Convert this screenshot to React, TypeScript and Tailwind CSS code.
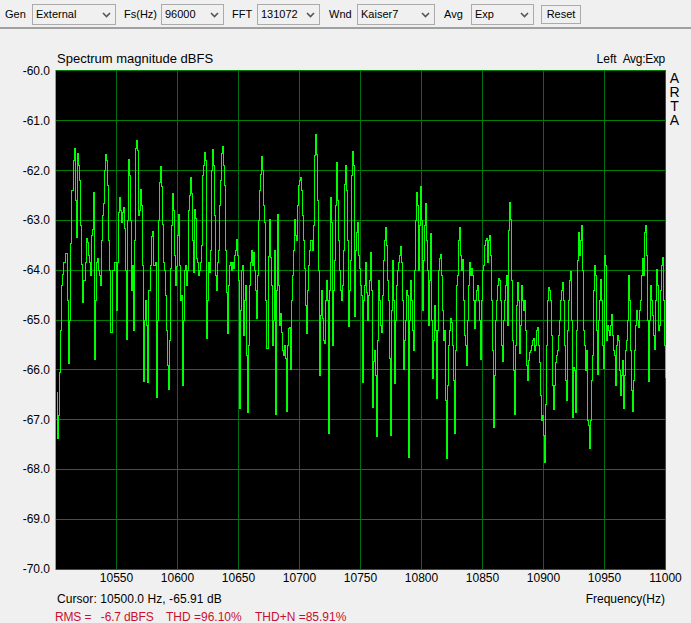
const font = { fontFamily: '"Liberation Sans", Arial, sans-serif' };

const selects = [
  { label: 'Gen', value: 'External', labelClass: 'ml-[5px] w-[27px]', boxClass: 'w-[84px]' },
  { label: 'Fs(Hz)', value: '96000', labelClass: 'ml-[8px] w-[37px]', boxClass: 'w-[63px]' },
  { label: 'FFT', value: '131072', labelClass: 'ml-[8px] w-[25px]', boxClass: 'w-[63px]' },
  { label: 'Wnd', value: 'Kaiser7', labelClass: 'ml-[9px] w-[28px]', boxClass: 'w-[78px]' },
  { label: 'Avg', value: 'Exp', labelClass: 'ml-[9px] w-[27px]', boxClass: 'w-[63px]' },
];

const yLabels = ['-60.0', '-61.0', '-62.0', '-63.0', '-64.0', '-65.0', '-66.0', '-67.0', '-68.0', '-69.0', '-70.0'];
const xLabels = ['10550', '10600', '10650', '10700', '10750', '10800', '10850', '10900', '10950', '11000'];

// turning points of the trace, page x / page y
const trace: [number, number][] = [
  [56, 392], [57, 438], [58, 415], [59, 372], [60, 330], [61, 285], [62, 274], [63, 262], [65, 253], [67, 300], [68, 363],
  [69, 320], [70, 243], [71, 190], [73, 160], [74, 148], [75, 200], [76, 237], [77, 153], [78, 165], [79, 180], [80, 225],
  [81, 264], [82, 302], [83, 280], [85, 262], [86, 238], [87, 242], [88, 255], [89, 262], [90, 275], [91, 235], [92, 229],
  [93, 192], [94, 359], [95, 300], [96, 262], [97, 258], [98, 270], [99, 275], [100, 285], [101, 240], [102, 215], [103, 203],
  [104, 170], [105, 154], [106, 160], [107, 185], [108, 240], [109, 270], [110, 332], [112, 270], [114, 262], [116, 310],
  [117, 262], [118, 212], [119, 197], [120, 210], [121, 222], [122, 212], [123, 207], [124, 228], [125, 270], [126, 339],
  [127, 220], [128, 159], [129, 175], [130, 220], [131, 290], [132, 265], [133, 330], [134, 240], [135, 148], [136, 140],
  [137, 150], [138, 215], [139, 210], [140, 189], [141, 205], [142, 265], [143, 381], [144, 320], [145, 300], [146, 325],
  [147, 382], [148, 290], [150, 265], [151, 236], [152, 231], [153, 265], [155, 262], [156, 397], [157, 320], [158, 220],
  [159, 182], [160, 166], [161, 186], [162, 224], [163, 262], [164, 270], [165, 295], [166, 330], [167, 365], [168, 389],
  [169, 340], [170, 268], [171, 225], [172, 193], [173, 210], [174, 255], [175, 285], [176, 266], [177, 235], [178, 214],
  [179, 265], [180, 300], [181, 295], [182, 385], [183, 320], [184, 270], [185, 265], [186, 285], [187, 270], [188, 210],
  [189, 195], [190, 177], [191, 193], [192, 240], [193, 272], [194, 209], [195, 218], [196, 258], [197, 262], [198, 275],
  [199, 270], [200, 262], [201, 245], [202, 175], [203, 165], [204, 152], [205, 160], [206, 338], [207, 300], [208, 262],
  [209, 272], [210, 250], [211, 170], [212, 149], [213, 165], [214, 215], [215, 275], [216, 290], [217, 262], [218, 250],
  [219, 205], [220, 180], [221, 153], [222, 146], [223, 165], [224, 185], [225, 250], [226, 292], [227, 333], [228, 285],
  [229, 265], [230, 262], [231, 270], [232, 262], [233, 268], [234, 255], [235, 250], [236, 239], [237, 255], [238, 280],
  [239, 408], [240, 310], [241, 270], [242, 265], [243, 335], [244, 300], [245, 285], [246, 355], [247, 412], [248, 345],
  [249, 285], [250, 262], [251, 250], [252, 265], [253, 252], [254, 270], [255, 290], [256, 318], [257, 275], [258, 220],
  [259, 190], [260, 174], [261, 156], [262, 170], [263, 205], [264, 222], [265, 300], [266, 348], [268, 256], [269, 219],
  [270, 257], [271, 285], [272, 345], [273, 320], [274, 250], [275, 414], [276, 290], [277, 214], [278, 285], [279, 325],
  [280, 313], [281, 332], [282, 350], [283, 355], [284, 345], [285, 358], [286, 411], [287, 345], [288, 328], [289, 327],
  [290, 369], [291, 300], [292, 275], [293, 250], [294, 219], [295, 235], [296, 240], [297, 205], [298, 185], [299, 180],
  [300, 177], [301, 190], [302, 215], [303, 240], [304, 268], [305, 305], [306, 333], [307, 290], [308, 265], [309, 250],
  [310, 240], [312, 250], [313, 225], [314, 155], [315, 134], [316, 154], [317, 200], [318, 270], [319, 375], [320, 315],
  [321, 290], [322, 318], [323, 340], [324, 343], [325, 300], [326, 280], [327, 300], [328, 433], [329, 290], [330, 197],
  [331, 222], [332, 345], [333, 290], [334, 260], [335, 205], [336, 162], [337, 200], [338, 240], [339, 270], [340, 290],
  [341, 300], [342, 285], [343, 250], [344, 184], [345, 165], [346, 190], [347, 240], [348, 326], [349, 290], [350, 260],
  [351, 175], [352, 151], [353, 165], [354, 316], [355, 250], [356, 232], [357, 222], [358, 255], [359, 268], [360, 285],
  [361, 295], [362, 382], [363, 300], [364, 285], [365, 262], [366, 292], [367, 320], [368, 295], [369, 280], [370, 252],
  [371, 290], [372, 407], [373, 361], [374, 350], [375, 375], [376, 436], [377, 340], [378, 280], [379, 300], [380, 325],
  [381, 332], [382, 295], [383, 260], [384, 240], [385, 227], [386, 245], [387, 280], [388, 300], [389, 358], [390, 435],
  [391, 310], [392, 260], [393, 300], [394, 383], [395, 320], [396, 285], [397, 270], [398, 262], [399, 255], [400, 246],
  [401, 262], [402, 300], [403, 369], [404, 340], [405, 320], [406, 290], [407, 295], [408, 457], [409, 320], [410, 280],
  [411, 300], [412, 330], [413, 350], [414, 270], [415, 220], [416, 192], [417, 205], [418, 270], [419, 225], [420, 186],
  [421, 220], [422, 310], [423, 260], [424, 225], [425, 203], [426, 240], [427, 270], [428, 325], [429, 280], [430, 233],
  [431, 320], [432, 378], [433, 340], [434, 305], [435, 330], [436, 398], [437, 330], [438, 270], [439, 258], [440, 254],
  [441, 275], [442, 310], [443, 340], [444, 330], [445, 400], [446, 458], [447, 385], [448, 345], [449, 330], [450, 318],
  [451, 322], [452, 345], [453, 380], [454, 433], [455, 350], [456, 285], [457, 275], [458, 240], [459, 227], [460, 255],
  [461, 270], [462, 259], [463, 300], [464, 335], [465, 345], [466, 365], [467, 320], [468, 285], [469, 262], [470, 275],
  [471, 268], [472, 275], [473, 300], [474, 328], [475, 300], [476, 290], [477, 285], [478, 300], [479, 320], [480, 359],
  [481, 300], [482, 270], [483, 265], [484, 245], [485, 240], [486, 238], [487, 262], [488, 240], [489, 235], [490, 255],
  [491, 300], [492, 350], [493, 427], [494, 375], [495, 320], [496, 300], [497, 285], [498, 278], [499, 280], [500, 300],
  [501, 345], [502, 361], [503, 320], [504, 300], [505, 285], [506, 275], [507, 325], [508, 230], [509, 202], [510, 219],
  [511, 280], [512, 340], [513, 370], [514, 414], [515, 345], [516, 305], [517, 282], [518, 300], [519, 353], [520, 325],
  [521, 285], [522, 300], [523, 310], [524, 300], [525, 330], [526, 365], [527, 380], [528, 360], [529, 352], [530, 350],
  [531, 345], [532, 340], [533, 338], [534, 350], [535, 345], [536, 330], [537, 327], [538, 345], [539, 362], [540, 395],
  [541, 420], [542, 415], [543, 435], [544, 462], [545, 404], [546, 345], [547, 300], [548, 287], [549, 290], [550, 300],
  [551, 335], [552, 385], [553, 409], [554, 385], [555, 362], [556, 355], [557, 350], [558, 335], [559, 320], [560, 300],
  [561, 290], [562, 282], [563, 300], [564, 345], [565, 380], [566, 400], [567, 330], [568, 300], [569, 280], [570, 271],
  [571, 320], [572, 417], [573, 367], [574, 370], [575, 412], [576, 330], [577, 260], [578, 232], [579, 255], [580, 240],
  [581, 225], [582, 270], [583, 330], [584, 345], [585, 370], [586, 350], [587, 420], [588, 425], [589, 448], [590, 420],
  [591, 380], [592, 355], [593, 290], [594, 265], [595, 275], [596, 330], [597, 374], [598, 320], [599, 300], [600, 279],
  [601, 300], [602, 345], [603, 368], [604, 255], [605, 265], [606, 340], [607, 325], [608, 330], [609, 335], [610, 325],
  [611, 314], [612, 335], [613, 350], [614, 355], [615, 385], [616, 345], [617, 335], [618, 340], [619, 370], [620, 395],
  [621, 375], [622, 360], [623, 408], [624, 375], [625, 350], [626, 340], [627, 320], [628, 275], [629, 300], [630, 350],
  [631, 390], [632, 411], [633, 380], [634, 350], [635, 325], [636, 310], [637, 320], [638, 327], [639, 310], [640, 300],
  [641, 275], [642, 258], [643, 275], [644, 232], [645, 225], [646, 255], [647, 320], [648, 381], [649, 320], [650, 285],
  [651, 300], [652, 315], [653, 335], [654, 349], [655, 300], [656, 269], [657, 285], [658, 330], [659, 325], [660, 290],
  [661, 265], [662, 257], [663, 300], [664, 345], [665, 378],
];

// plot box starts at page x 55, y 70
const tracePath = trace
  .map(([x, y], i) => {
    const px = x - 55 + 0.5;
    const py = y - 70;
    return i === 0 ? `M${px} ${py}` : `H${px}V${py}`;
  })
  .join('');

function Chevron() {
  return (
    <svg width="9" height="6" viewBox="0 0 9 6" className="shrink-0">
      <path d="M1 1L4.5 4.5L8 1" fill="none" stroke="#555" strokeWidth="1.6" />
    </svg>
  );
}

function Plot() {
  const vertical = [61, 122, 183, 244, 305, 366, 427, 488, 549];
  const horizontal = [50, 100, 150, 200, 250, 299, 349, 399, 449];
  return (
    <svg width="611" height="500" className="block shrink-0 bg-black" shapeRendering="crispEdges">
      {vertical.map((x) => (
        <line key={x} x1={x + 0.5} x2={x + 0.5} y1="0" y2="500" stroke="#006f14" />
      ))}
      {horizontal.map((y) => (
        <line key={y} x1="0" x2="611" y1={y + 0.5} y2={y + 0.5} stroke="#007f00" />
      ))}
      <rect x="0.5" y="0.5" width="610" height="499" fill="none" stroke="#007f00" />
      <line x1="0.5" x2="0.5" y1="0" y2="500" stroke="#b8a800" />
      <path d={tracePath} fill="none" stroke="#00ff00" />
    </svg>
  );
}

export default function App() {
  return (
    <div className="w-[691px] h-[623px] overflow-hidden bg-[#f0f0f0] text-black text-[12px]" style={font}>
      <div className="h-[29px] flex items-start pt-[4px] border-b-2 border-[#a0a0a0] text-[11px]">
        {selects.map((s) => (
          <div key={s.label} className="flex items-center h-[21px]">
            <span className={s.labelClass}>{s.label}</span>
            <div className={`${s.boxClass} h-[21px] flex items-center justify-between pl-[3px] pr-[4px] border border-[#ababab] bg-[#f0f0f0]`}>
              <span>{s.value}</span>
              <Chevron />
            </div>
          </div>
        ))}
        <div className="ml-[7px] mt-[1px] w-[40px] h-[19px] flex items-center justify-center border border-[#ababab] bg-[#f0f0f0]">
          Reset
        </div>
      </div>

      <div className="flex justify-between items-baseline pl-[57px] pr-[26px] pt-[22px] h-[41px] leading-[16px]">
        <span className="text-[13px]">Spectrum magnitude dBFS</span>
        <span className="flex gap-[6px]">
          <span>Left</span>
          <span className="tracking-[-0.3px]">Avg:Exp</span>
        </span>
      </div>

      <div className="flex items-start">
        <div className="w-[50px] h-[514px] -mt-[7px] -mb-[7px] flex flex-col justify-between items-end leading-[16px]">
          {yLabels.map((l) => (
            <span key={l}>{l}</span>
          ))}
        </div>
        <div className="ml-[5px]">
          <Plot />
        </div>
        <div className="w-[17px] flex flex-col items-center text-[14px] leading-[14px] pt-[1px]">
          <span>A</span>
          <span>R</span>
          <span>T</span>
          <span>A</span>
        </div>
      </div>

      <div className="flex ml-[86px] leading-[16px]">
        {xLabels.map((l) => (
          <span key={l} className="w-[61px] text-center shrink-0">
            {l}
          </span>
        ))}
      </div>

      <div className="flex justify-between pl-[57px] pr-[26px] mt-[5px] leading-[16px]">
        <span className="tracking-[0.07px]">Cursor: 10500.0 Hz, -65.91 dB</span>
        <span>Frequency(Hz)</span>
      </div>

      <div className="flex pl-[55px] mt-[2px] leading-[16px] text-[#c8102e] whitespace-pre">
        <span className="w-[111px] tracking-[-0.15px]">RMS =   -6.7 dBFS</span>
        <span className="w-[89px]">THD =96.10%</span>
        <span>THD+N =85.91%</span>
      </div>
    </div>
  );
}
